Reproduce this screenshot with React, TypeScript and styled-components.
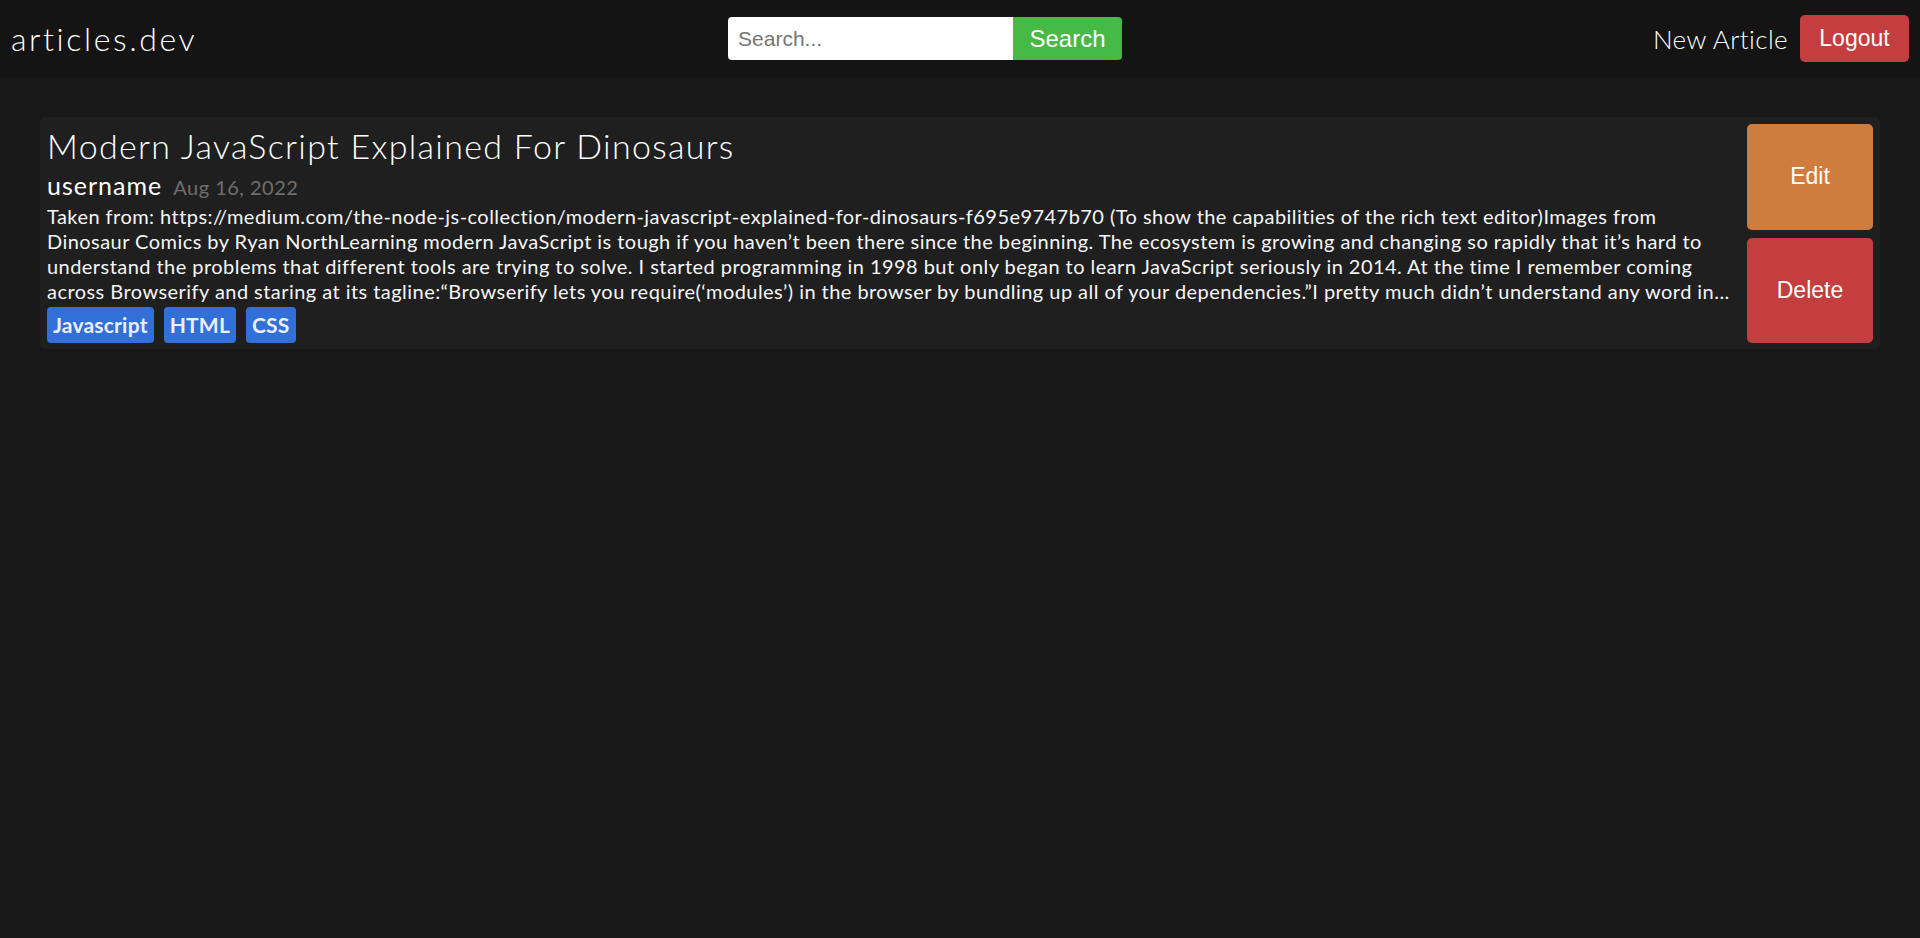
import React from "react";
import styled, { createGlobalStyle } from "styled-components";

const GlobalStyle = createGlobalStyle`
  html, body {
    margin: 0;
    padding: 0;
    background: #181818;
    color: #f2f2f2;
    font-family: Lato, "Noto Sans", sans-serif;
  }
  * { box-sizing: border-box; }
`;

const Header = styled.header`
  height: 77px;
  background: #141414;
  display: flex;
  align-items: center;
  justify-content: space-between;
  padding: 0 11px 0 11px;
`;

const Logo = styled.a`
  font-family: Lato, sans-serif;
  font-weight: 300;
  font-size: 32px;
  letter-spacing: 2.6px;
  color: #ffffff;
  text-decoration: none;
  line-height: 1;
`;

const SearchForm = styled.form`
  display: flex;
  align-items: stretch;
  height: 43px;
  border-radius: 4px;
  overflow: hidden;
`;

const SearchInput = styled.input`
  width: 285px;
  border: none;
  outline: none;
  padding: 0 10px;
  font-family: "Liberation Sans", Arial, sans-serif;
  font-size: 21px;
  color: #222;
  background: #ffffff;
  &::placeholder { color: #757575; }
`;

const SearchButton = styled.button`
  width: 109px;
  border: none;
  background: #47b947;
  color: #ffffff;
  font-family: "Liberation Sans", Arial, sans-serif;
  font-size: 24px;
  padding: 0;
  cursor: pointer;
`;

const NavRight = styled.nav`
  display: flex;
  align-items: center;
  gap: 12px;
`;

const NavLink = styled.a`
  font-family: Lato, sans-serif;
  font-weight: 300;
  font-size: 26px;
  letter-spacing: 0.4px;
  color: #ffffff;
  text-decoration: none;
`;

const SolidButton = styled.button<{ $bg: string }>`
  border: none;
  background: ${(p) => p.$bg};
  color: #ffffff;
  font-family: "Liberation Sans", Arial, sans-serif;
  font-size: 23px;
  border-radius: 5px;
  cursor: pointer;
  padding: 0;
`;

const LogoutButton = styled(SolidButton)`
  width: 109px;
  height: 47px;
`;

const Main = styled.main`
  padding: 40px 40px;
`;

const Card = styled.article`
  background: #1f1f1f;
  border-radius: 5px;
  padding: 7px 7px 6px 7px;
  display: flex;
  gap: 7px;
`;

const Content = styled.div`
  flex: 1;
  min-width: 0;
  display: flex;
  flex-direction: column;
`;

const Title = styled.h2`
  margin: 2px 0 0 0;
  font-family: Lato, sans-serif;
  font-weight: 300;
  font-size: 34px;
  letter-spacing: 1.3px;
  line-height: 40px;
  color: #ffffff;
`;

const Meta = styled.div`
  margin-top: 4px;
  display: flex;
  align-items: baseline;
  gap: 11px;
  line-height: 30px;
`;

const Author = styled.span`
  font-size: 25px;
  letter-spacing: 1px;
  color: #ffffff;
`;

const DateText = styled.span`
  font-size: 20px;
  letter-spacing: 0.5px;
  color: #6f6f6f;
`;

const Body = styled.p`
  margin: 2px 0 0 0;
  font-size: 20px;
  line-height: 25px;
  color: #f6f6f6;
  display: -webkit-box;
  -webkit-line-clamp: 4;
  -webkit-box-orient: vertical;
  overflow: hidden;
  letter-spacing: 0.45px;
`;

const Tags = styled.div`
  margin-top: 3px;
  display: flex;
  gap: 10px;
`;

const Tag = styled.span`
  background: #3170d9;
  color: #eeeef8;
  font-weight: 700;
  font-size: 21px;
  letter-spacing: 0.2px;
  height: 36px;
  line-height: 36px;
  padding: 0 6px;
  border-radius: 4px;
`;

const Actions = styled.div`
  width: 126px;
  display: flex;
  flex-direction: column;
  gap: 8px;
`;

const ActionButton = styled(SolidButton)`
  flex: 1;
`;

const bodyText =
  "Taken from: https://medium.com/the-node-js-collection/modern-javascript-explained-for-dinosaurs-f695e9747b70 (To show the capabilities of the rich text editor)Images from Dinosaur Comics by Ryan NorthLearning modern JavaScript is tough if you haven\u2019t been there since the beginning. The ecosystem is growing and changing so rapidly that it\u2019s hard to understand the problems that different tools are trying to solve. I started programming in 1998 but only began to learn JavaScript seriously in 2014. At the time I remember coming across Browserify and staring at its tagline:\u201CBrowserify lets you require(\u2018modules\u2019) in the browser by bundling up all of your dependencies.\u201DI pretty much didn\u2019t understand any word in...";

export default function App() {
  return (
    <>
      <GlobalStyle />
      <Header>
        <Logo href="#">articles.dev</Logo>
        <SearchForm onSubmit={(e) => e.preventDefault()}>
          <SearchInput placeholder="Search..." />
          <SearchButton type="submit">Search</SearchButton>
        </SearchForm>
        <NavRight>
          <NavLink href="#">New Article</NavLink>
          <LogoutButton $bg="#c43d3f">Logout</LogoutButton>
        </NavRight>
      </Header>
      <Main>
        <Card>
          <Content>
            <Title>Modern JavaScript Explained For Dinosaurs</Title>
            <Meta>
              <Author>username</Author>
              <DateText>Aug 16, 2022</DateText>
            </Meta>
            <Body>{bodyText}</Body>
            <Tags>
              <Tag>Javascript</Tag>
              <Tag>HTML</Tag>
              <Tag>CSS</Tag>
            </Tags>
          </Content>
          <Actions>
            <ActionButton $bg="#cf7d3e">Edit</ActionButton>
            <ActionButton $bg="#c43d3f">Delete</ActionButton>
          </Actions>
        </Card>
      </Main>
    </>
  );
}
